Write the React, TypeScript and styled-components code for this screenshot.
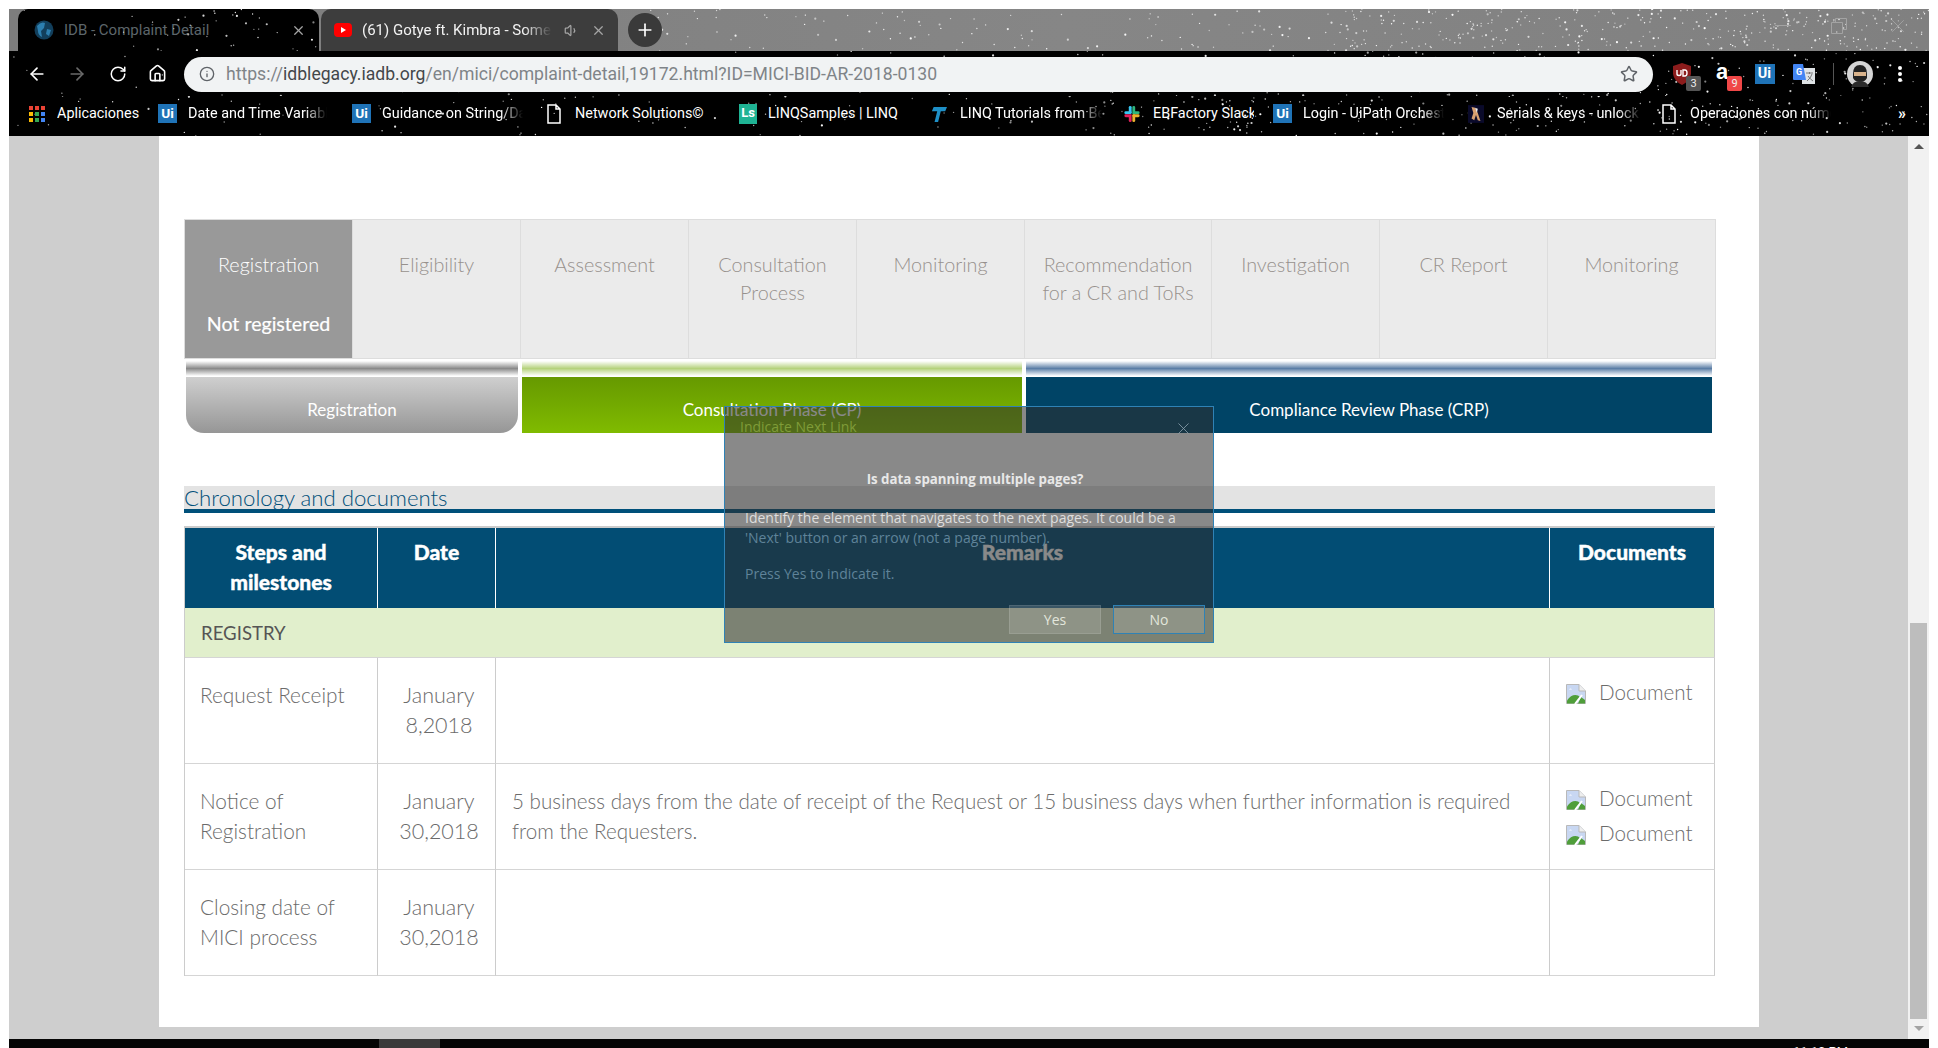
import { useMemo } from "react";
import styled, { createGlobalStyle } from "styled-components";
import { ArrowLeft, ArrowRight, Home, Info, Plus, RotateCw, Star, Volume1, X } from "lucide-react";

const GlobalStyle = createGlobalStyle`
  html, body { margin: 0; padding: 0; background: #fff; height: 100%; overflow: hidden; }
  * { box-sizing: border-box; }
`;

const Screen = styled.div`
  position: relative;
  width: 1938px;
  height: 1048px;
  padding: 9px 9px 0;
  display: flex;
  flex-direction: column;
  background: #fff;
  font-family: "Lato", "Liberation Sans", sans-serif;
`;

/* ---------- browser chrome ---------- */
const StarLayer = styled.svg`
  position: absolute;
  left: 0;
  top: 0;
  pointer-events: none;
`;

const TabStrip = styled.div`
  position: relative;
  height: 42px;
  flex: none;
  display: flex;
  align-items: stretch;
  padding-left: 9px;
  background: linear-gradient(90deg, #7d7d7d, #868686 55%, #808080);
  font-family: "Roboto", sans-serif;
`;

const Tab = styled.div<{ $active?: boolean; $w: number }>`
  position: relative;
  z-index: 1;
  width: ${(p) => p.$w}px;
  flex: none;
  display: flex;
  align-items: center;
  padding-left: ${(p) => (p.$active ? 16 : 13)}px;
  border-radius: 10px 10px 0 0;
  background: ${(p) => (p.$active ? "#000" : "#3d3d3d")};
  color: ${(p) => (p.$active ? "#5d666b" : "#f2f2f2")};
  font-size: 15px;
  margin-right: ${(p) => (p.$active ? 2 : 9)}px;
  overflow: hidden;
`;

const TabTitle = styled.span<{ $w: number; $fade?: boolean }>`
  width: ${(p) => p.$w}px;
  flex: none;
  margin-left: 10px;
  white-space: nowrap;
  overflow: hidden;
  ${(p) => p.$fade && "mask-image: linear-gradient(90deg, #000 85%, transparent);"}
`;

const TabClose = styled.span<{ $left: number }>`
  display: flex;
  margin-left: ${(p) => p.$left}px;
  color: #a5a5a5;
`;

const NewTab = styled.div`
  position: relative;
  z-index: 1;
  width: 34px;
  height: 34px;
  margin-left: 1px;
  align-self: center;
  border-radius: 50%;
  background: #3a3a3a;
  color: #fff;
  display: flex;
  align-items: center;
  justify-content: center;
`;

const WindowButtons = styled.div`
  position: relative;
  z-index: 1;
  margin-left: auto;
  display: flex;
  align-items: center;
  gap: 40px;
  padding: 0 20px 8px 0;
  color: #a3a3a3;
`;

const Toolbar = styled.div`
  position: relative;
  height: 45px;
  flex: none;
  background: #000;
  display: flex;
  align-items: center;
  color: #fff;
`;

const NavButton = styled.span<{ $dim?: boolean; $w: number }>`
  position: relative;
  z-index: 1;
  width: ${(p) => p.$w}px;
  display: flex;
  justify-content: center;
  color: ${(p) => (p.$dim ? "#6a6a6a" : "#fff")};
`;

const UrlPill = styled.div`
  position: relative;
  z-index: 1;
  width: 1469px;
  height: 35px;
  margin-left: 7px;
  margin-top: 1px;
  border-radius: 18px;
  background: #f1f3f4;
  display: flex;
  align-items: center;
  padding-left: 15px;
  color: #5f6368;
  font-family: "Roboto", sans-serif;
  font-size: 17.6px;
`;

const UrlText = styled.span`
  margin-left: 11px;
  color: #7f8488;
  white-space: nowrap;
`;

const UrlHost = styled.span`
  color: #43474a;
`;

const UrlStar = styled.span`
  margin-left: auto;
  margin-right: 15px;
  display: flex;
  color: #5f6368;
`;

const Extensions = styled.div`
  position: relative;
  z-index: 1;
  margin-left: 11px;
  display: flex;
  align-items: center;
`;

const ExtensionSlot = styled.span<{ $w: number }>`
  position: relative;
  width: ${(p) => p.$w}px;
  height: 28px;
  display: flex;
  align-items: center;
  justify-content: center;
`;

const Badge = styled.span<{ $bg: string }>`
  position: absolute;
  right: 3px;
  bottom: -3px;
  width: 15px;
  height: 15px;
  border-radius: 2px;
  background: ${(p) => p.$bg};
  color: #eee;
  font: 11px/15px "Roboto", sans-serif;
  text-align: center;
`;

const UiBox = styled.span<{ $size: number; $inset?: number }>`
  width: ${(p) => p.$size}px;
  height: ${(p) => p.$size}px;
  margin-left: ${(p) => p.$inset ?? 0}px;
  margin-right: ${(p) => p.$inset ?? 0}px;
  background: #1f73b7;
  color: #fff;
  font: 700 ${(p) => p.$size * 0.72}px/${(p) => p.$size}px "Roboto", sans-serif;
  text-align: center;
  flex: none;
`;

const AmazonA = styled.span`
  margin: -4px 5px 0 0;
  color: #fff;
  font: 700 22px/22px "Liberation Sans", sans-serif;
`;

const Divider = styled.span`
  width: 1px;
  height: 22px;
  background: #555;
  margin: 0 13px 0 9px;
`;

const BookmarkBar = styled.div`
  position: relative;
  height: 40px;
  flex: none;
  background: #000;
  display: flex;
  align-items: center;
  padding: 0 0 5px 20px;
  color: #fff;
  font-family: "Roboto", sans-serif;
  font-size: 14.4px;
`;

const Bookmark = styled.div<{ $w: number; $gap?: number }>`
  position: relative;
  z-index: 1;
  width: ${(p) => p.$w}px;
  flex: none;
  display: flex;
  align-items: center;
  gap: ${(p) => p.$gap ?? 13}px;
`;

const BookmarkLabel = styled.span<{ $w: number; $fade?: boolean }>`
  width: ${(p) => p.$w}px;
  white-space: nowrap;
  overflow: hidden;
  ${(p) => p.$fade && "mask-image: linear-gradient(90deg, #000 84%, transparent);"}
`;

const LsBox = styled.span`
  width: 18px;
  height: 20px;
  margin: 0 -2px 0 0;
  background: #1fb394;
  color: #fff;
  font: 700 13px/18px "Roboto", sans-serif;
  text-align: center;
  flex: none;
`;

const Chevrons = styled.span`
  position: absolute;
  right: 23px;
  z-index: 1;
  font-size: 16px;
  font-weight: 700;
`;

/* ---------- page ---------- */
const Viewport = styled.div`
  flex: 1;
  min-height: 0;
  display: flex;
`;

const PageBody = styled.div`
  flex: 1;
  background: #cecece;
  padding: 0 0 12px 150px;
`;

const Sheet = styled.main`
  width: 1600px;
  height: 100%;
  background: #fff;
  padding: 83px 0 0 25px;
`;

const StepsGrid = styled.div`
  width: 1532px;
  height: 140px;
  display: grid;
  grid-template-columns: repeat(5, 168px) 187px repeat(3, 168px);
  border: 1px solid #ddd;
  border-right: 0;
`;

const StepCell = styled.div<{ $active?: boolean }>`
  background: ${(p) => (p.$active ? "#999" : "#ebebeb")};
  color: ${(p) => (p.$active ? "#fff" : "#97918d")};
  border-right: 1px solid #ddd;
  text-align: center;
  padding-top: 30px;
  font-size: 19.8px;
  font-weight: 300;
  line-height: 28px;
`;

const StepStatus = styled.div`
  margin-top: 32px;
  font-size: 19.6px;
  font-weight: 400;
  -webkit-text-stroke: 0.2px #fff;
`;

const Phases = styled.div`
  display: flex;
  gap: 4px;
  margin: 2px 0 0 2px;
`;

const Phase = styled.div<{ $w: number }>`
  width: ${(p) => p.$w}px;
`;

const PhaseStripe = styled.div<{ $c: string }>`
  height: 15px;
  margin-bottom: 1px;
  background: linear-gradient(180deg, #fff 0%, ${(p) => p.$c} 50%, #fff 100%);
`;

const PhaseBar = styled.div<{ $bg: string; $round?: boolean }>`
  height: 56px;
  padding-top: 8px;
  display: flex;
  align-items: center;
  justify-content: center;
  background: ${(p) => p.$bg};
  border-radius: ${(p) => (p.$round ? "0 0 18px 18px" : "0")};
  color: #fff;
  font-size: 17px;
  font-weight: 400;
`;

const SectionTitle = styled.h2`
  width: 1531px;
  height: 27px;
  margin: 53px 0 13px;
  background: #e3e3e3;
  border-bottom: 4px solid #00507a;
  color: #00507a;
  font-size: 22.2px;
  font-weight: 300;
  line-height: 23px;
  white-space: nowrap;
`;

const Chronology = styled.table`
  width: 1531px;
  table-layout: fixed;
  border-collapse: separate;
  border-spacing: 0;
  border-top: 2px solid #ccc;
  border-left: 1px solid #ccc;
`;

const Head = styled.th`
  height: 80px;
  padding: 9px 8px 0;
  vertical-align: top;
  background: #024d74;
  border-right: 1px solid #fff;
  color: #fff;
  font-size: 21px;
  font-weight: 900;
  line-height: 30px;
  text-align: center;
  -webkit-text-stroke: 0.4px #fff;
`;

const SectionCell = styled.td`
  height: 50px;
  padding: 0 0 0 16px;
  background: #e1efcc;
  border-right: 1px solid #ccc;
  border-bottom: 1px solid #d5d5d5;
  color: #555;
  font-size: 18.6px;
  font-weight: 400;
`;

const Cell = styled.td<{ $center?: boolean }>`
  height: 106px;
  padding: 22px 15px 0 ${(p) => (p.$center ? 20 : 15)}px;
  vertical-align: top;
  border-right: 1px solid #ccc;
  border-bottom: 1px solid #d5d5d5;
  color: #6b6b6b;
  font-size: ${(p) => (p.$center ? 21.5 : 20.8)}px;
  font-weight: 300;
  line-height: 30px;
  text-align: ${(p) => (p.$center ? "center" : "left")};
`;

const RemarkCell = styled(Cell)`
  padding-left: 16px;
  padding-right: 20px;
  font-size: 20.6px;
`;

const DocCell = styled(Cell)`
  padding: 17px 0 0 16px;
  font-size: 20.6px;
`;

const DocLink = styled.div`
  height: 35px;
  display: flex;
  align-items: center;
  gap: 13px;
  line-height: 35px;
`;

const Scrollbar = styled.div`
  width: 21px;
  flex: none;
  background: #f1f1f1;
  display: flex;
  flex-direction: column;
  align-items: center;
`;

const ScrollArrow = styled.span<{ $down?: boolean }>`
  display: block;
  width: 0;
  height: 0;
  margin: ${(p) => (p.$down ? "7px 0 0" : "8px 0 0")};
  border-left: 5px solid transparent;
  border-right: 5px solid transparent;
  ${(p) => (p.$down ? "border-top: 5px solid #a3a3a3;" : "border-bottom: 5px solid #555;")}
`;

const ScrollThumb = styled.div`
  width: 17px;
  height: 396px;
  margin-top: auto;
  background: #bdbdbd;
`;

const ScrollFoot = styled.div`
  height: 20px;
`;

const Taskbar = styled.footer`
  height: 9px;
  flex: none;
  background: #050505;
  display: flex;
  overflow: hidden;
`;

const TaskTile = styled.span`
  width: 61px;
  margin-left: 370px;
  background: #3a3a3a;
`;

const TaskClock = styled.span`
  margin-left: auto;
  margin-right: 79px;
  padding-top: 6px;
  color: #fff;
  font: 13px/14px "Roboto", sans-serif;
  width: 57px;
  white-space: nowrap;
`;

/* ---------- floating dialog ---------- */
const Dialog = styled.section`
  position: absolute;
  left: 724px;
  top: 406px;
  width: 490px;
  height: 237px;
  background: rgba(45, 45, 45, 0.56);
  border: 1px solid #2f82b5;
  font-family: "Open Sans", sans-serif;
  font-size: 14px;
  display: flex;
  flex-direction: column;
`;

const DialogHeader = styled.header`
  height: 38px;
  padding: 11px 20px 0 15px;
  display: flex;
  justify-content: space-between;
  color: #7f9c38;
  font-size: 14px;
  line-height: 18px;
`;

const DialogClose = styled.span`
  display: flex;
  margin-top: 1px;
  color: #8fa5b2;
`;

const DialogTitle = styled.h3`
  margin: 24px 0 0;
  padding-left: 12px;
  text-align: center;
  color: #e8e8e8;
  font-size: 13.3px;
  font-weight: 700;
  line-height: 20px;
`;

const DialogBody = styled.div`
  margin-top: 19px;
  padding-left: 20px;
  line-height: 20px;
`;

const DialogLine = styled.div<{ $tone: string; $gap?: number }>`
  color: ${(p) => p.$tone};
  margin-top: ${(p) => p.$gap ?? 0}px;
  white-space: nowrap;
`;

const DialogActions = styled.div`
  margin-top: auto;
  padding: 0 8px 8px 0;
  display: flex;
  justify-content: flex-end;
  gap: 12px;
`;

const DialogButton = styled.button<{ $focus?: boolean }>`
  width: 92px;
  height: 29px;
  padding: 0;
  background: rgba(255, 255, 255, 0.14);
  border: 1px solid ${(p) => (p.$focus ? "#2f82b5" : "rgba(255,255,255,.1)")};
  color: #e2e6dc;
  font-family: inherit;
  font-size: 14px;
`;

/* ---------- drawings ---------- */
function Stars({ w, h, count, seed, from = 0, fill = "#fff" }: { w: number; h: number; count: number; seed: number; from?: number; fill?: string }) {
  const dots = useMemo(() => {
    let s = seed;
    const next = () => {
      s = (s * 16807) % 2147483647;
      return s / 2147483647;
    };
    return Array.from({ length: count }, () => {
      const bias = next();
      const x = bias > 0.45 ? w * (0.55 + next() * 0.45) : w * next();
      return { x: from + x * (1 - from / w), y: next() * h, r: next() > 0.8 ? 1.1 : 0.7, o: 0.5 + next() * 0.5 };
    });
  }, [w, h, count, seed, from]);
  return (
    <StarLayer width={w} height={h}>
      {dots.map((d, i) => (
        <circle key={i} cx={d.x} cy={d.y} r={d.r} fill={fill} opacity={d.o} />
      ))}
    </StarLayer>
  );
}

function BrokenImage() {
  return (
    <svg width="20" height="20" viewBox="0 0 20 20" style={{ flex: "none", marginTop: 3 }}>
      <path d="M0.5 0.5H13L19.5 7V19.5H0.5Z" fill="#c8d7f2" stroke="#b9b9b9" />
      <path d="M13 0.5V7H19.5" fill="#eee" stroke="#b9b9b9" />
      <path d="M3 5.5q1.5-2 3 0z" fill="#fff" />
      <path d="M1 19.5v-3q5-7 11-5l2 1.5-5 6.5z" fill="#4f9e3a" />
      <path d="M15 13l4 3v3.5h-7z" fill="#4f9e3a" />
      <path d="M9 20L16 11" stroke="#fff" strokeWidth="2" />
    </svg>
  );
}

function PageIcon() {
  return (
    <svg width="16" height="20" viewBox="0 0 16 20" style={{ flex: "none" }}>
      <path d="M2 1H10L14 5V19H2Z M10 1V5H14" fill="none" stroke="#fff" strokeWidth="1.5" />
    </svg>
  );
}

function AppsGrid() {
  const colors = ["#ea4335", "#ea4335", "#ea4335", "#fbbc05", "#34a853", "#4285f4", "#fbbc05", "#34a853", "#4285f4"];
  return (
    <svg width="16" height="16" viewBox="0 0 16 16" style={{ flex: "none" }}>
      {colors.map((c, i) => (
        <rect key={i} x={(i % 3) * 6} y={Math.floor(i / 3) * 6} width="4" height="4" fill={c} />
      ))}
    </svg>
  );
}

function SlackIcon() {
  return (
    <svg width="16" height="20" viewBox="0 0 18 20" style={{ flex: "none" }}>
      <g strokeWidth="3.2" strokeLinecap="round">
        <path d="M7 2.5V8" stroke="#36c5f0" />
        <path d="M2 8.5H7" stroke="#36c5f0" />
        <path d="M11 2.5V8.5H16" stroke="#2eb67d" fill="none" />
        <path d="M11 17.5V12" stroke="#ecb22e" />
        <path d="M16 12H11" stroke="#ecb22e" />
        <path d="M7 17.5V12H2" stroke="#e01e5a" fill="none" />
      </g>
    </svg>
  );
}

function TutorialIcon() {
  return (
    <svg width="16" height="20" viewBox="0 0 18 20" style={{ flex: "none" }}>
      <path d="M3 2H18L16 7H11L8 19H4L7 7H1Z" fill="#1e8fc6" />
    </svg>
  );
}

function KeysIcon() {
  return (
    <svg width="16" height="20" viewBox="0 0 18 20" style={{ flex: "none" }}>
      <rect width="18" height="20" fill="#0a0a2a" />
      <path d="M4 2l4 1 3 6 3 9-3-1-2-6-2 6-3-2 2-6z" fill="#d8a070" />
      <path d="M8 3l3 1-1 5z" fill="#eee" />
    </svg>
  );
}

function GlobeIcon() {
  return (
    <svg width="20" height="20" viewBox="0 0 20 20" style={{ flex: "none" }}>
      <circle cx="10" cy="10" r="9.5" fill="#123f5c" />
      <path d="M3 6q4-5 8-3l-1 5-3 3 1 6q-4-2-4-6z" fill="#2c7fb0" />
      <path d="M13 9l4 1-2 6-3-2z" fill="#2c7fb0" />
    </svg>
  );
}

function YoutubeIcon() {
  return (
    <svg width="18" height="18" viewBox="0 0 18 18" style={{ flex: "none" }}>
      <rect x="0" y="2" width="18" height="14" rx="4" fill="#f00" />
      <path d="M7 6L12 9L7 12Z" fill="#fff" />
    </svg>
  );
}

function RestoreIcon() {
  return (
    <svg width="16" height="16" viewBox="0 0 16 16">
      <path d="M0.5 4.5H11.5V15.5H0.5Z M4.5 4V0.5H15.5V11.5H12" fill="none" stroke="currentColor" />
    </svg>
  );
}

function UblockIcon() {
  return (
    <svg width="20" height="24" viewBox="0 0 20 24" style={{ marginRight: 4 }}>
      <path d="M10 1L19 4V12Q18 19 10 23Q2 19 1 12V4Z" fill="#8c1c1c" />
      <path d="M5 8V12Q5 13.5 7 13.5T9 12V8M11 14V8H13Q15 8 15 11T13 14Z" fill="none" stroke="#fff" strokeWidth="1.4" />
    </svg>
  );
}

function TranslateIcon() {
  return (
    <svg width="22" height="20" viewBox="0 0 22 20">
      <rect x="9" y="4" width="13" height="16" fill="#dfe3e6" />
      <path d="M13 9h7M16.5 8v2M14 17q4-3 5-7M15 12q2 3 5 5" fill="none" stroke="#777" />
      <path d="M0 1Q0 0 1 0H10L13 16H1Q0 16 0 15Z" fill="#4285f4" />
      <text x="3" y="11" fill="#fff" fontSize="9" fontWeight="700" fontFamily="Roboto">G</text>
    </svg>
  );
}

function AvatarIcon() {
  return (
    <svg width="26" height="26" viewBox="0 0 26 26">
      <circle cx="13" cy="13" r="13" fill="#d5d5d5" />
      <path d="M6 13Q6 4 13 4T20 13V17Q18 21 13 21T6 17Z" fill="#222" />
      <rect x="7" y="11" width="12" height="4" fill="#d9b38c" />
      <path d="M4 26Q6 20 13 20T22 26Z" fill="#2c2c2c" />
    </svg>
  );
}

function KebabIcon() {
  return (
    <svg width="6" height="18" viewBox="0 0 6 18">
      <circle cx="3" cy="3" r="2" fill="#fff" />
      <circle cx="3" cy="9" r="2" fill="#fff" />
      <circle cx="3" cy="15" r="2" fill="#fff" />
    </svg>
  );
}

const bookmarks = [
  { w: 194, text: "Date and Time Variable", label: 139, icon: <UiBox $size={19} $inset={-2}>Ui</UiBox> },
  { w: 192, text: "Guidance on String/DateTime", label: 141, icon: <UiBox $size={19} $inset={-2}>Ui</UiBox> },
  { w: 193, text: "Network Solutions©", label: 134, icon: <PageIcon /> },
  { w: 192, text: "LINQSamples | LINQ", label: 133, icon: <LsBox>Ls</LsBox> },
  { w: 193, text: "LINQ Tutorials from Beginner", label: 142, icon: <TutorialIcon /> },
  { w: 151, text: "EBFactory Slack", label: 101, icon: <SlackIcon /> },
  { w: 193, text: "Login - UiPath Orchestrator", label: 141, icon: <UiBox $size={19} $inset={-2}>Ui</UiBox> },
  { w: 193, text: "Serials & keys - unlock", label: 144, icon: <KeysIcon /> },
  { w: 190, text: "Operaciones con números", label: 141, icon: <PageIcon /> },
];

const steps = [
  ["Eligibility"],
  ["Assessment"],
  ["Consultation", "Process"],
  ["Monitoring"],
  ["Recommendation", "for a CR and ToRs"],
  ["Investigation"],
  ["CR Report"],
  ["Monitoring"],
];

const rows = [
  { step: ["Request Receipt"], date: ["January", "8,2018"], remark: "", docs: 1 },
  {
    step: ["Notice of", "Registration"],
    date: ["January", "30,2018"],
    remark:
      "5 business days from the date of receipt of the Request or 15 business days when further information is required from the Requesters.",
    docs: 2,
  },
  { step: ["Closing date of", "MICI process"], date: ["January", "30,2018"], remark: "", docs: 0 },
];

export default function App() {
  return (
    <Screen>
      <GlobalStyle />
      <TabStrip>
        <Stars w={1920} h={42} count={480} seed={77} from={620} />
        <Tab $active $w={301}>
          <Stars w={301} h={42} count={40} seed={11} />
          <GlobeIcon />
          <TabTitle $w={160}>IDB - Complaint Detail</TabTitle>
          <TabClose $left={67}>
            <X size={15} />
          </TabClose>
        </Tab>
        <Tab $w={297}>
          <YoutubeIcon />
          <TabTitle $w={190} $fade>(61) Gotye ft. Kimbra - Somebody That I Used</TabTitle>
          <TabClose $left={12}>
            <Volume1 size={15} />
          </TabClose>
          <TabClose $left={12}>
            <X size={15} />
          </TabClose>
        </Tab>
        <NewTab>
          <Plus size={20} />
        </NewTab>
        <WindowButtons>
          <svg width="16" height="2"><rect width="16" height="1" fill="currentColor" /></svg>
          <RestoreIcon />
          <X size={22} strokeWidth={1} />
        </WindowButtons>
      </TabStrip>
      <Toolbar>
        <Stars w={1920} h={45} count={280} seed={345} />
        <NavButton $w={40} style={{ marginLeft: 8 }}>
          <ArrowLeft size={20} />
        </NavButton>
        <NavButton $w={40} $dim>
          <ArrowRight size={20} />
        </NavButton>
        <NavButton $w={41}>
          <RotateCw size={18} />
        </NavButton>
        <NavButton $w={39}>
          <Home size={19} />
        </NavButton>
        <UrlPill>
          <Info size={16} />
          <UrlText>
            https://<UrlHost>idblegacy.iadb.org</UrlHost>/en/mici/complaint-detail,19172.html?ID=MICI-BID-AR-2018-0130
          </UrlText>
          <UrlStar>
            <Star size={18} />
          </UrlStar>
        </UrlPill>
        <Extensions>
          <ExtensionSlot $w={40}>
            <UblockIcon />
            <Badge $bg="#555">3</Badge>
          </ExtensionSlot>
          <ExtensionSlot $w={41}>
            <AmazonA>a</AmazonA>
            <Badge $bg="#f04747">9</Badge>
          </ExtensionSlot>
          <ExtensionSlot $w={39}>
            <UiBox $size={20}>Ui</UiBox>
          </ExtensionSlot>
          <ExtensionSlot $w={40}>
            <TranslateIcon />
          </ExtensionSlot>
          <Divider />
          <AvatarIcon />
          <NavButton $w={40} style={{ marginLeft: 7 }}>
            <KebabIcon />
          </NavButton>
        </Extensions>
      </Toolbar>
      <BookmarkBar>
        <Stars w={1920} h={40} count={300} seed={901} />
        <Bookmark $w={131} $gap={12}>
          <AppsGrid />
          <BookmarkLabel $w={90}>Aplicaciones</BookmarkLabel>
        </Bookmark>
        {bookmarks.map((b) => (
          <Bookmark key={b.text} $w={b.w}>
            {b.icon}
            <BookmarkLabel $w={b.label} $fade={b.text.length > 19}>{b.text}</BookmarkLabel>
          </Bookmark>
        ))}
        <Chevrons>»</Chevrons>
      </BookmarkBar>

      <Viewport>
        <PageBody>
          <Sheet>
            <StepsGrid>
              <StepCell $active>
                Registration
                <StepStatus>Not registered</StepStatus>
              </StepCell>
              {steps.map((lines, i) => (
                <StepCell key={i}>
                  {lines.map((l) => (
                    <div key={l}>{l}</div>
                  ))}
                </StepCell>
              ))}
            </StepsGrid>
            <Phases>
              <Phase $w={332}>
                <PhaseStripe $c="#8a8a8a" />
                <PhaseBar $round $bg="linear-gradient(180deg,#cfcfcf,#969696)">Registration</PhaseBar>
              </Phase>
              <Phase $w={500}>
                <PhaseStripe $c="#b5d27c" />
                <PhaseBar $bg="linear-gradient(180deg,#669900,#80bb00)">Consultation Phase (CP)</PhaseBar>
              </Phase>
              <Phase $w={686}>
                <PhaseStripe $c="#5b7ea6" />
                <PhaseBar $bg="#004466">Compliance Review Phase (CRP)</PhaseBar>
              </Phase>
            </Phases>
            <SectionTitle>Chronology and documents</SectionTitle>
            <Chronology>
              <colgroup>
                <col style={{ width: 193 }} />
                <col style={{ width: 118 }} />
                <col style={{ width: 1054 }} />
                <col style={{ width: 165 }} />
              </colgroup>
              <thead>
                <tr>
                  <Head>
                    Steps and
                    <br />
                    milestones
                  </Head>
                  <Head>Date</Head>
                  <Head>Remarks</Head>
                  <Head>Documents</Head>
                </tr>
              </thead>
              <tbody>
                <tr>
                  <SectionCell colSpan={4}>REGISTRY</SectionCell>
                </tr>
                {rows.map((r) => (
                  <tr key={r.step[0]}>
                    <Cell>
                      {r.step.map((l) => (
                        <div key={l}>{l}</div>
                      ))}
                    </Cell>
                    <Cell $center>
                      {r.date.map((l) => (
                        <div key={l}>{l}</div>
                      ))}
                    </Cell>
                    <RemarkCell>{r.remark}</RemarkCell>
                    <DocCell>
                      {Array.from({ length: r.docs }, (_, i) => (
                        <DocLink key={i}>
                          <BrokenImage />
                          Document
                        </DocLink>
                      ))}
                    </DocCell>
                  </tr>
                ))}
              </tbody>
            </Chronology>
          </Sheet>
        </PageBody>
        <Scrollbar>
          <ScrollArrow />
          <ScrollThumb />
          <ScrollFoot>
            <ScrollArrow $down />
          </ScrollFoot>
        </Scrollbar>
      </Viewport>
      <Taskbar>
        <TaskTile />
        <TaskClock>11:10 PM</TaskClock>
      </Taskbar>

      <Dialog>
        <DialogHeader>
          Indicate Next Link
          <DialogClose>
            <X size={19} strokeWidth={1} />
          </DialogClose>
        </DialogHeader>
        <DialogTitle>Is data spanning multiple pages?</DialogTitle>
        <DialogBody>
          <DialogLine $tone="#dedede">Identify the element that navigates to the next pages. It could be a</DialogLine>
          <DialogLine $tone="#5f8399">'Next' button or an arrow (not a page number).</DialogLine>
          <DialogLine $tone="#5f8399" $gap={16}>Press Yes to indicate it.</DialogLine>
        </DialogBody>
        <DialogActions>
          <DialogButton>Yes</DialogButton>
          <DialogButton $focus>No</DialogButton>
        </DialogActions>
      </Dialog>
    </Screen>
  );
}
